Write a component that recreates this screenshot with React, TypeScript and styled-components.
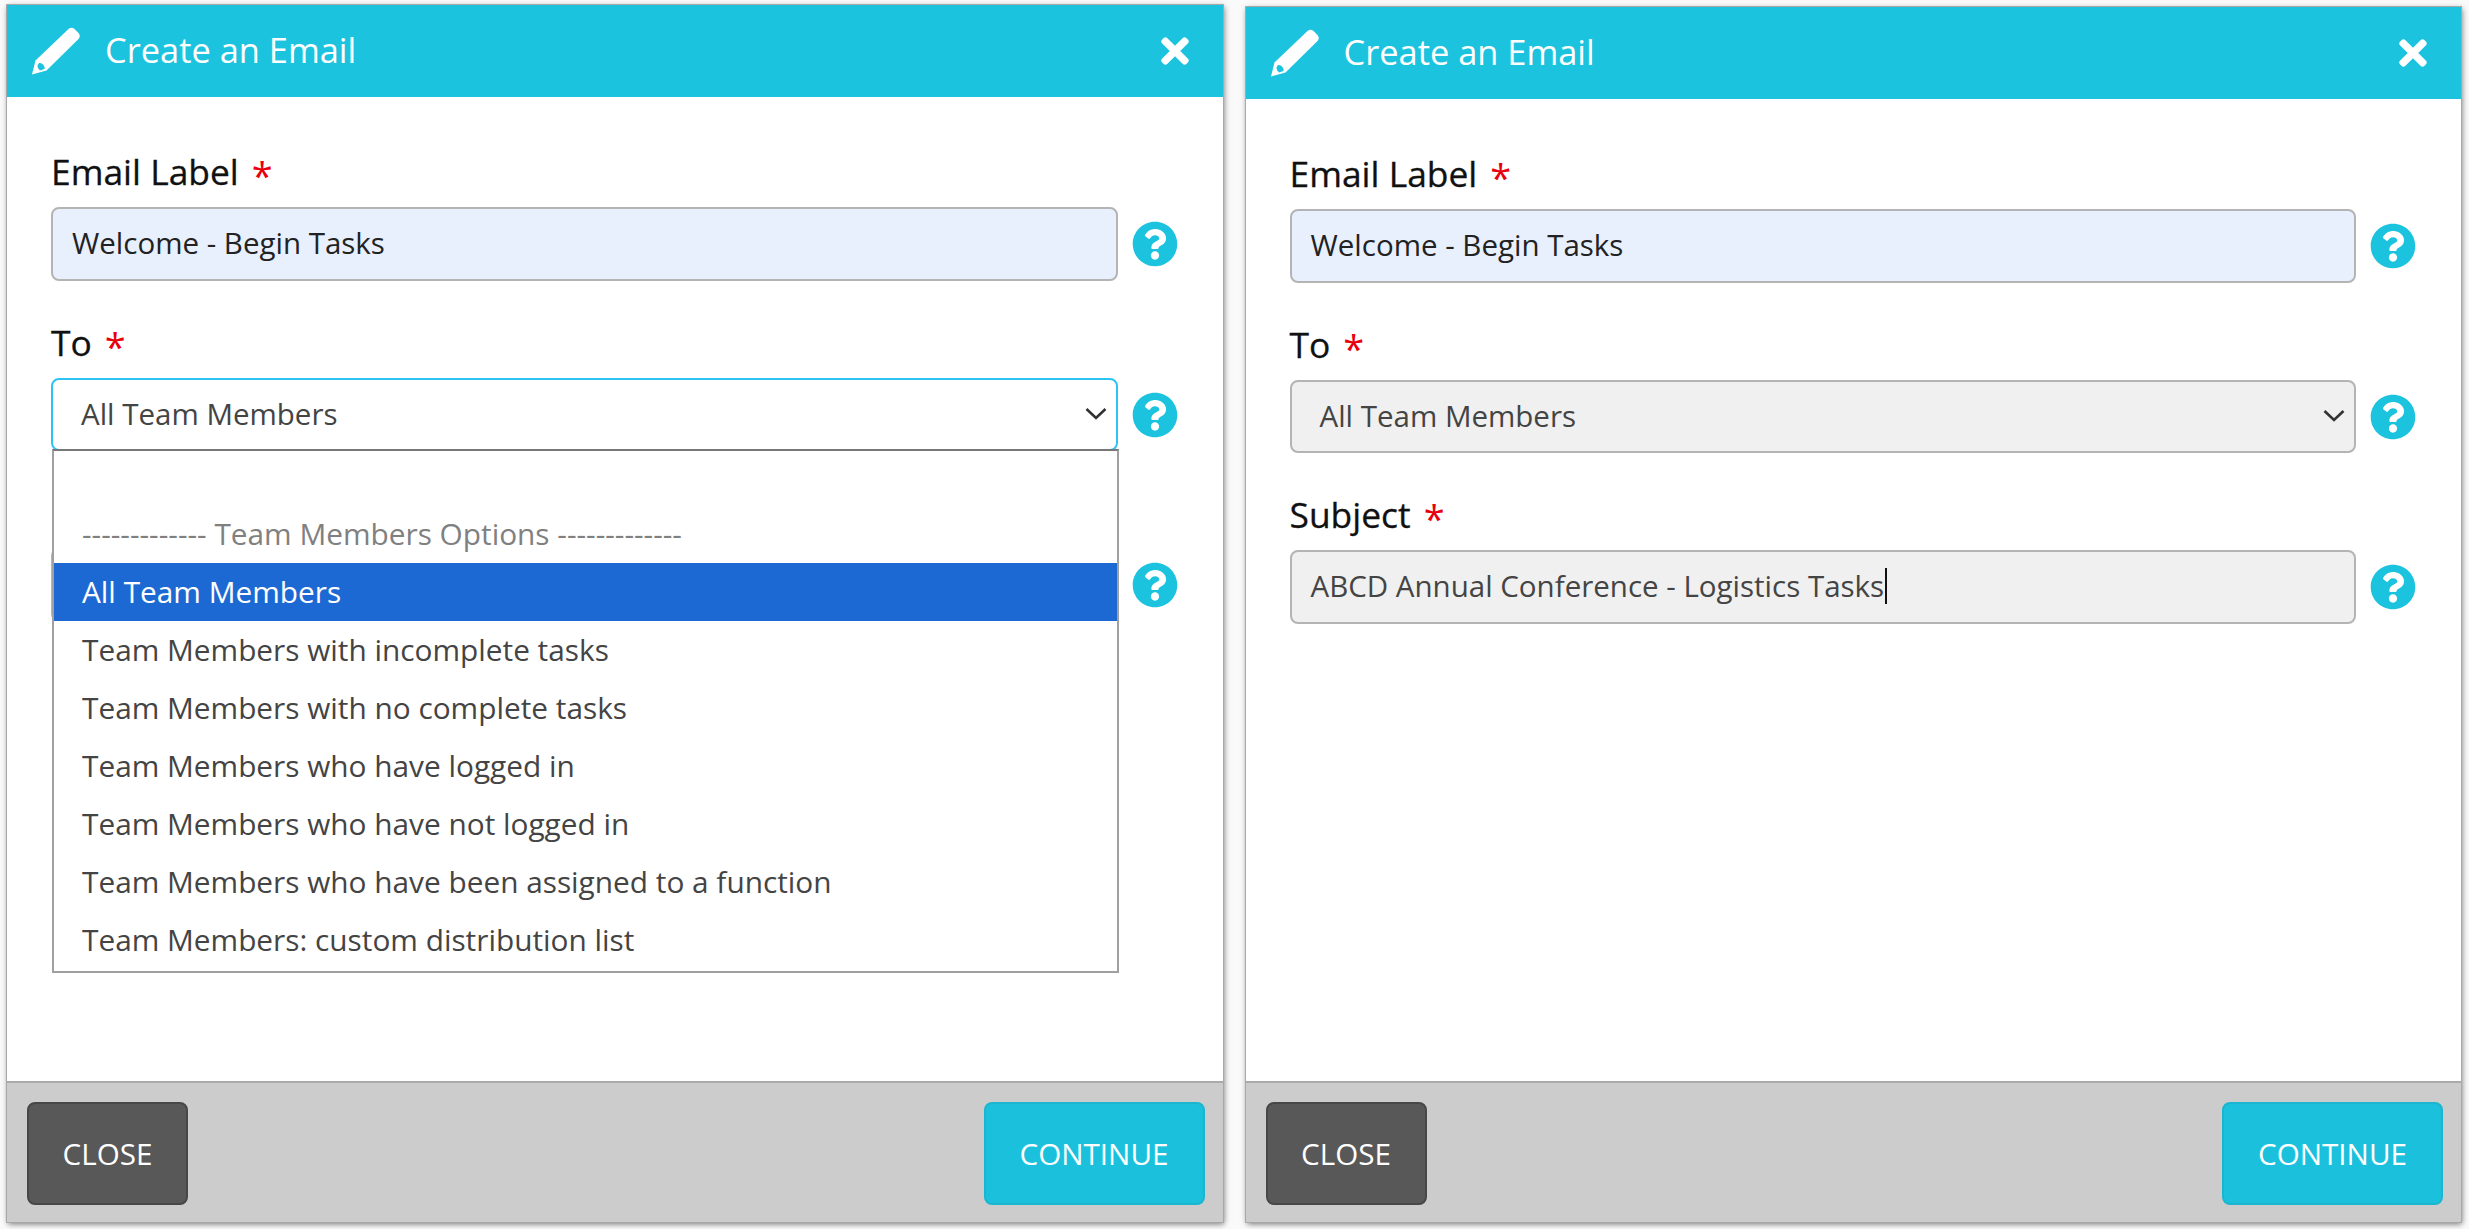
import React from "react";
import styled, { createGlobalStyle } from "styled-components";
import { FaQuestionCircle, FaTimes } from "react-icons/fa";

const teal = "#1cc3de";

const GlobalStyle = createGlobalStyle`
  html, body {
    margin: 0;
    padding: 0;
    background: #fafafa;
  }
  body {
    font-family: "Open Sans", "Noto Sans", sans-serif;
  }
`;

const teamOptions = [
  "Team Members with incomplete tasks",
  "Team Members with no complete tasks",
  "Team Members who have logged in",
  "Team Members who have not logged in",
  "Team Members who have been assigned to a function",
  "Team Members: custom distribution list",
];

const PencilIcon = () => (
  <svg width="48" height="48" viewBox="0 0 48 48" aria-hidden="true">
    <path
      fill="#fff"
      d="M36.5 2 Q39.5 -0.5 42.5 2 L46.5 6 Q49 9 46.5 12 L14.5 43.5 L0 47.5 L3.5 33.5 Z"
    />
    <path fill={teal} d="M7 36 Q9.5 35.5 11.5 38 Q13 40 12.5 42 L8 43.5 Q5 41 5.5 38.5 Z" />
  </svg>
);

const ChevronIcon = () => (
  <svg width="22" height="14" viewBox="0 0 22 14" aria-hidden="true">
    <path d="M1.5 2 L11 11 L20.5 2" fill="none" stroke="#333" strokeWidth="2.6" />
  </svg>
);

// label is left out where the open dropdown covers the field
const Field = ({
  label,
  children,
}: {
  label?: string;
  children: React.ReactNode;
}) => (
  <FieldBlock>
    <FieldLabel>
      {label}
      {label && <Required>*</Required>}
    </FieldLabel>
    <FieldRow>
      <Control>{children}</Control>
      <HelpButton>
        <FaQuestionCircle size={46} color={teal} />
      </HelpButton>
    </FieldRow>
  </FieldBlock>
);

const Dialog = ({
  lowered,
  children,
}: {
  lowered?: boolean;
  children: React.ReactNode;
}) => (
  <Panel $lowered={lowered}>
    <Header>
      <PencilIcon />
      <Title>Create an Email</Title>
      <CloseIcon>
        <FaTimes size={40} color="#fff" />
      </CloseIcon>
    </Header>
    <Body>{children}</Body>
    <Footer>
      <CloseButton>CLOSE</CloseButton>
      <ContinueButton>CONTINUE</ContinueButton>
    </Footer>
  </Panel>
);

export default function App() {
  return (
    <Page>
      <GlobalStyle />
      <Dialog>
        <Field label="Email Label">
          <TextBox $variant="filled">Welcome - Begin Tasks</TextBox>
        </Field>
        <Field label="To">
          <SelectBox $focused>
            All Team Members
            <ChevronIcon />
          </SelectBox>
          <Dropdown>
            <BlankOption />
            <GroupOption>------------- Team Members Options -------------</GroupOption>
            <Option $selected>All Team Members</Option>
            {teamOptions.map((option) => (
              <Option key={option}>{option}</Option>
            ))}
          </Dropdown>
        </Field>
        <Field>
          <TextBox $variant="disabled" />
        </Field>
      </Dialog>
      <Dialog lowered>
        <Field label="Email Label">
          <TextBox $variant="filled">Welcome - Begin Tasks</TextBox>
        </Field>
        <Field label="To">
          <SelectBox>
            All Team Members
            <ChevronIcon />
          </SelectBox>
        </Field>
        <Field label="Subject">
          <TextBox $variant="disabled">
            ABCD Annual Conference - Logistics Tasks
            <Caret />
          </TextBox>
        </Field>
      </Dialog>
    </Page>
  );
}

const Page = styled.div`
  display: flex;
  gap: 23px;
  box-sizing: border-box;
  height: 1229px;
  padding: 5px 8px 7px 7px;
`;

const Panel = styled.section<{ $lowered?: boolean }>`
  flex: 1;
  display: flex;
  flex-direction: column;
  margin-top: ${(p) => (p.$lowered ? "2px" : "0")};
  background: #fff;
  box-shadow: 0 0 0 1px #a8a8a8, 1px 2px 6px rgba(0, 0, 0, 0.55);
`;

const Header = styled.header`
  display: flex;
  align-items: center;
  flex: 0 0 92px;
  padding: 0 28px 0 25px;
  background: ${teal};
`;

const Title = styled.h1`
  flex: 1;
  margin: 0 0 3px 25px;
  font-size: 34.4px;
  font-weight: 400;
  color: #fff;
`;

const CloseIcon = styled.span`
  display: flex;
`;

const Body = styled.main`
  flex: 1;
  display: flex;
  flex-direction: column;
  gap: 42px;
  padding: 55px 45px 0 44px;
`;

const FieldBlock = styled.div`
  display: flex;
  flex-direction: column;
  gap: 18px;
`;

const FieldLabel = styled.label`
  display: flex;
  align-items: center;
  height: 37px;
  font-size: 35.4px;
  font-weight: 500;
  color: #111;
  -webkit-text-stroke: 0.3px #111;
`;

const Required = styled.span`
  margin: 8px 0 0 13px;
  font-size: 38px;
  color: #e8000d;
  -webkit-text-stroke: 0;
`;

const FieldRow = styled.div`
  display: flex;
  align-items: center;
  gap: 14px;
`;

const Control = styled.div`
  position: relative;
  flex: 1;
`;

const HelpButton = styled.span`
  display: flex;
`;

const TextBox = styled.div<{ $variant: "filled" | "disabled" }>`
  display: flex;
  align-items: center;
  box-sizing: border-box;
  height: 74px;
  padding: 0 19px 3px;
  border: 2px solid #b4b4b4;
  border-radius: 8px;
  font-size: 29.5px;
  color: ${(p) => (p.$variant === "filled" ? "#222" : "#444")};
  background: ${(p) => (p.$variant === "filled" ? "#e8f0fe" : "#f0f0f0")};
`;

const Caret = styled.span`
  width: 2px;
  height: 36px;
  margin-left: 1px;
  background: #111;
`;

const SelectBox = styled.div<{ $focused?: boolean }>`
  display: flex;
  align-items: center;
  justify-content: space-between;
  box-sizing: border-box;
  height: 73px;
  padding: 0 9px 2px 28px;
  border: 2px solid ${(p) => (p.$focused ? "#2cc4f5" : "#b4b4b4")};
  border-radius: 8px;
  font-size: 29.5px;
  color: #444;
  background: ${(p) => (p.$focused ? "#fff" : "#f0f0f0")};
`;

const Dropdown = styled.div`
  position: absolute;
  top: 71px;
  left: 1px;
  right: -1px;
  z-index: 2;
  box-sizing: border-box;
  padding-bottom: 2px;
  border: 2px solid #a0a0a0;
  border-top-color: #777;
  background: #fff;
`;

const Option = styled.div<{ $selected?: boolean }>`
  display: flex;
  align-items: center;
  box-sizing: border-box;
  height: 58px;
  padding: 0 28px 2px;
  font-size: 29.8px;
  color: ${(p) => (p.$selected ? "#fff" : "#444")};
  background: ${(p) => (p.$selected ? "#1d69d4" : "transparent")};
`;

const BlankOption = styled(Option)`
  height: 54px;
`;

const GroupOption = styled(Option)`
  color: #808080;
`;

const Footer = styled.footer`
  display: flex;
  justify-content: space-between;
  align-items: flex-start;
  flex: 0 0 141px;
  box-sizing: border-box;
  padding: 19px 18px 0 20px;
  border-top: 2px solid #aaa;
  background: #ccc;
`;

const FooterButton = styled.button`
  height: 103px;
  padding: 0;
  border-radius: 8px;
  font-family: inherit;
  font-size: 29.6px;
  color: #fff;
`;

const CloseButton = styled(FooterButton)`
  width: 161px;
  border: 2px solid #474747;
  background: #585858;
`;

const ContinueButton = styled(FooterButton)`
  width: 221px;
  border: 2px solid #1ab6d0;
  background: #1bc1dc;
`;
